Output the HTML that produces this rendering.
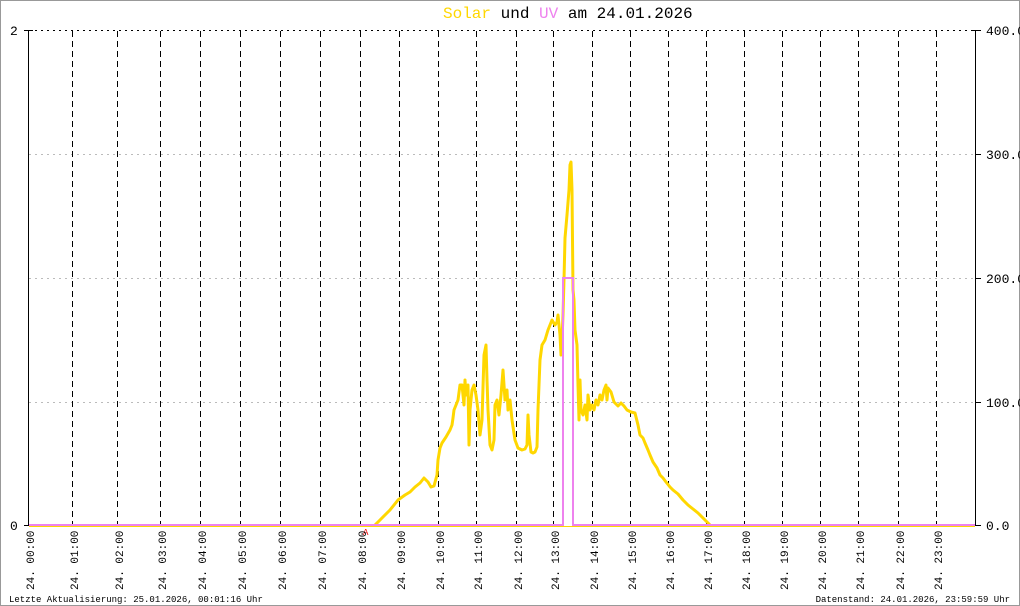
<!DOCTYPE html>
<html><head><meta charset="utf-8"><style>
html,body{margin:0;padding:0;background:#fff;}
svg{display:block;}
text{font-family:"Liberation Mono","DejaVu Sans Mono",monospace;}
</style></head><body>
<svg width="1020" height="606" viewBox="0 0 1020 606" xmlns="http://www.w3.org/2000/svg">
<rect x="0.5" y="0.5" width="1019" height="605" fill="#fff" stroke="#999" stroke-width="1"/>
<text x="443" y="18" font-size="16" fill="#000"><tspan fill="#ffd700">Solar</tspan> und <tspan fill="#ee82ee">UV</tspan> am 24.01.2026</text>
<g stroke="#bbb" stroke-width="1" stroke-dasharray="2,4">
<line x1="29" y1="154.5" x2="975" y2="154.5"/>
<line x1="29" y1="278.5" x2="975" y2="278.5"/>
<line x1="29" y1="402.5" x2="975" y2="402.5"/>
</g>
<line x1="29" y1="30.5" x2="975" y2="30.5" stroke="#000" stroke-dasharray="2,4"/>
<g stroke="#000" stroke-width="1" stroke-dasharray="6,4">
<line x1="72.5" y1="31" x2="72.5" y2="526"/><line x1="117.5" y1="31" x2="117.5" y2="526"/><line x1="160.5" y1="31" x2="160.5" y2="526"/><line x1="200.5" y1="31" x2="200.5" y2="526"/><line x1="240.5" y1="31" x2="240.5" y2="526"/><line x1="280.5" y1="31" x2="280.5" y2="526"/><line x1="320.5" y1="31" x2="320.5" y2="526"/><line x1="360.5" y1="31" x2="360.5" y2="526"/><line x1="399.5" y1="31" x2="399.5" y2="526"/><line x1="438.5" y1="31" x2="438.5" y2="526"/><line x1="476.5" y1="31" x2="476.5" y2="526"/><line x1="516.5" y1="31" x2="516.5" y2="526"/><line x1="553.5" y1="31" x2="553.5" y2="526"/><line x1="592.5" y1="31" x2="592.5" y2="526"/><line x1="630.5" y1="31" x2="630.5" y2="526"/><line x1="668.5" y1="31" x2="668.5" y2="526"/><line x1="706.5" y1="31" x2="706.5" y2="526"/><line x1="744.5" y1="31" x2="744.5" y2="526"/><line x1="782.5" y1="31" x2="782.5" y2="526"/><line x1="820.5" y1="31" x2="820.5" y2="526"/><line x1="858.5" y1="31" x2="858.5" y2="526"/><line x1="898.5" y1="31" x2="898.5" y2="526"/><line x1="936.5" y1="31" x2="936.5" y2="526"/>
</g>
<g stroke="#000" stroke-width="1">
<line x1="28.5" y1="30" x2="28.5" y2="526"/>
<line x1="975.5" y1="30" x2="975.5" y2="526"/>
<line x1="24" y1="30.5" x2="33" y2="30.5"/>
<line x1="24" y1="525.5" x2="29" y2="525.5"/>
<line x1="971" y1="30.5" x2="981" y2="30.5"/>
<line x1="975" y1="154.5" x2="981" y2="154.5"/>
<line x1="975" y1="278.5" x2="981" y2="278.5"/>
<line x1="975" y1="402.5" x2="981" y2="402.5"/>
<line x1="975" y1="525.5" x2="981" y2="525.5"/>
</g>
<g font-size="13" fill="#000">
<text x="10" y="35">2</text><text x="10" y="530">0</text>
<text x="986" y="35">400.0</text><text x="986" y="159">300.0</text><text x="986" y="283">200.0</text><text x="986" y="407">100.0</text><text x="986" y="530">0.0</text>
</g>
<line x1="29" y1="526.5" x2="975" y2="526.5" stroke="#ffd700" stroke-width="1"/>
<polyline fill="none" stroke="#ffd700" stroke-width="3" stroke-linejoin="round" points="375,525 380,520 390,510 398,500 405,495 410,492 415,487 420,483 424,478 428,482 431,487 434,486 437,475 438,460 440,448 442,443 446,437 450,430 452,425 453,418 454,410 456,405 458,400 460,385 462,385 464,405 465,380 466,395 468,385 469,445 470,410 472,390 474,385 476,395 478,410 480,435 482,420 484,355 486,345 487,380 488,410 490,445 492,450 494,440 495,405 497,400 499,415 501,395 503,370 505,400 507,390 508,410 510,400 512,420 515,440 518,448 522,450 525,449 527,445 528,415 529,435 531,452 533,453 535,452 537,447 538,410 540,360 542,345 545,340 548,330 550,325 552,320 555,325 557,322 558,315 560,335 561,355 562,340 563,315 564,280 565,238 567,215 569,190 570,165 571,162 572,190 573,290 574,300 575,330 577,345 578,385 579,420 580,380 581,410 583,415 585,405 587,420 588,395 590,410 592,405 594,410 596,400 598,405 600,395 602,400 604,390 606,385 607,400 608,388 611,392 614,402 618,406 621,403 624,406 627,410 631,412 635,413 638,425 640,435 643,438 645,443 648,450 650,455 653,462 657,468 660,475 663,478 666,482 670,487 673,490 678,494 683,500 688,505 693,509 698,513 703,518 708,523 710,525"/>
<polyline fill="none" stroke="#ee82ee" stroke-width="2" points="29,525 563,525 563,278 573,278 573,525 975,525"/>
<text x="363" y="535" font-size="9" fill="#e00">A</text>
<g font-size="11" fill="#000">
<text transform="translate(34,590) rotate(-90)">24. 00:00</text>
<text transform="translate(78,590) rotate(-90)">24. 01:00</text>
<text transform="translate(123,590) rotate(-90)">24. 02:00</text>
<text transform="translate(166,590) rotate(-90)">24. 03:00</text>
<text transform="translate(206,590) rotate(-90)">24. 04:00</text>
<text transform="translate(246,590) rotate(-90)">24. 05:00</text>
<text transform="translate(286,590) rotate(-90)">24. 06:00</text>
<text transform="translate(326,590) rotate(-90)">24. 07:00</text>
<text transform="translate(366,590) rotate(-90)">24. 08:00</text>
<text transform="translate(405,590) rotate(-90)">24. 09:00</text>
<text transform="translate(444,590) rotate(-90)">24. 10:00</text>
<text transform="translate(482,590) rotate(-90)">24. 11:00</text>
<text transform="translate(522,590) rotate(-90)">24. 12:00</text>
<text transform="translate(559,590) rotate(-90)">24. 13:00</text>
<text transform="translate(598,590) rotate(-90)">24. 14:00</text>
<text transform="translate(636,590) rotate(-90)">24. 15:00</text>
<text transform="translate(674,590) rotate(-90)">24. 16:00</text>
<text transform="translate(712,590) rotate(-90)">24. 17:00</text>
<text transform="translate(750,590) rotate(-90)">24. 18:00</text>
<text transform="translate(788,590) rotate(-90)">24. 19:00</text>
<text transform="translate(826,590) rotate(-90)">24. 20:00</text>
<text transform="translate(864,590) rotate(-90)">24. 21:00</text>
<text transform="translate(904,590) rotate(-90)">24. 22:00</text>
<text transform="translate(942,590) rotate(-90)">24. 23:00</text>
</g>
<g font-size="9" fill="#000">
<text x="9" y="602">Letzte Aktualisierung: 25.01.2026, 00:01:16 Uhr</text>
<text x="1010" y="602" text-anchor="end">Datenstand: 24.01.2026, 23:59:59 Uhr</text>
</g>
</svg>
</body></html>
